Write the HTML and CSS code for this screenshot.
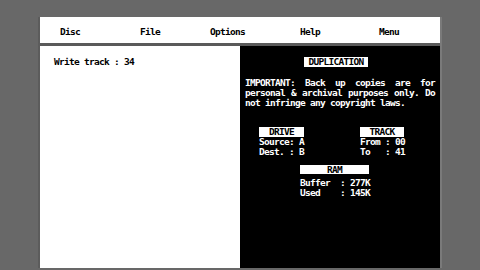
FILE: index.html
```html
<!DOCTYPE html>
<html>
<head>
<meta charset="utf-8">
<link rel="stylesheet" href="styles.css">
</head>
<body>
<div class="window">
  <div class="menubar">
    <span class="m m-disc">Disc</span>
    <span class="m m-file">File</span>
    <span class="m m-opt">Options</span>
    <span class="m m-help">Help</span>
    <span class="m">Menu</span>
  </div>
  <div class="content">
    <div class="left">
      <div class="line">Write track : 34</div>
    </div>
    <div class="right">
      <div class="title inv">DUPLICATION</div>
      <p class="para">IMPORTANT: Back up copies are for personal &amp; archival purposes only. Do not infringe any copyright laws.</p>
      <div class="cols">
        <div class="col col-drive">
          <div class="head inv">DRIVE</div>
          <div class="line">Source: A</div>
          <div class="line">Dest.&nbsp;: B</div>
        </div>
        <div class="col col-track">
          <div class="head inv">TRACK</div>
          <div class="line">From : 00</div>
          <div class="line">To&nbsp;&nbsp;&nbsp;: 41</div>
        </div>
      </div>
      <div class="ram">
        <div class="head head-ram inv">RAM</div>
        <div class="line first">Buffer&nbsp;&nbsp;: 277K</div>
        <div class="line">Used&nbsp;&nbsp;&nbsp;&nbsp;: 145K</div>
      </div>
    </div>
  </div>
</div>
</body>
</html>
```
FILE: styles.css
```css
html, body {
  margin: 0;
  padding: 0;
}
body {
  width: 480px;
  height: 270px;
  background: #686868;
  overflow: hidden;
  font-family: "DejaVu Sans Mono", "Liberation Mono", monospace;
  font-weight: bold;
  font-size: 9.5px;
  letter-spacing: -0.72px;
  line-height: 10px;
}
.window {
  margin: 17px 0 0 40px;
  width: 400px;
  height: 251px;
  display: flex;
  flex-direction: column;
  background: #fff;
  box-shadow: 2px 0 0 #7a7a7a, -2px 0 0 #5c5c5c;
}
.menubar {
  box-sizing: border-box;
  height: 29px;
  padding: 10px 0 0 20px;
  border-bottom: 3px solid #5a5a5a;
  display: flex;
  color: #000;
}
.m { display: block; }
.m-disc { width: 80px; }
.m-file { width: 70px; }
.m-opt { width: 90px; }
.m-help { width: 79px; }
.content {
  flex: 1;
  display: flex;
}
.left {
  width: 200px;
  background: #fff;
  color: #000;
  padding: 11px 0 0 14px;
  box-sizing: border-box;
}
.right {
  width: 200px;
  background: #000;
  color: #fff;
  display: flex;
  flex-direction: column;
  align-items: flex-start;
}
.inv {
  background: #fff;
  color: #000;
  text-align: center;
  height: 10px;
}
.title {
  margin: 11px 0 0 64px;
  width: 64px;
}
.para {
  margin: 11px 0 0 5px;
  width: 190px;
  text-align: justify;
}
.cols {
  display: flex;
  margin-top: 19px;
}
.col-drive { margin-left: 19px; width: 101px; }
.col-drive .head { width: 45px; }
.col-track .head { width: 44px; }
.ram {
  margin: 8px 0 0 60px;
}
.head-ram { width: 69px; height: 9px; }
.ram .first { margin-top: 4px; }
```
